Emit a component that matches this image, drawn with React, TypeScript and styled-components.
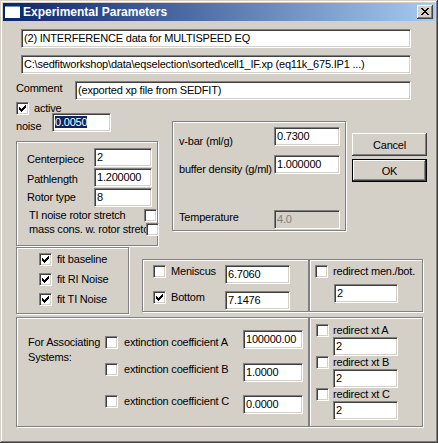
import React from "react";
import styled, { createGlobalStyle } from "styled-components";

const FONT = `"Liberation Sans", Arial, sans-serif`;

const GlobalStyle = createGlobalStyle`
  html, body { margin: 0; padding: 0; background: #d4d0c8; }
  * { box-sizing: border-box; }
`;

const Window = styled.div`
  width: 438px;
  height: 443px;
  padding: 3px;
  background: #d4d0c8;
  box-shadow: inset -1px -1px #404040, inset 1px 1px #d4d0c8, inset -2px -2px #808080, inset 2px 2px #fff;
  font-family: ${FONT};
  font-size: 11px;
  letter-spacing: -0.2px;
  color: #000;
  display: flex;
  flex-direction: column;
  overflow: hidden;
`;

const TitleBar = styled.div`
  height: 18px;
  flex: none;
  display: flex;
  align-items: center;
  padding: 0 2px;
  background: linear-gradient(to right, #0a246a, #a6caf0);
`;

const TitleText = styled.span`
  flex: 1;
  margin-left: 2px;
  font-family: "Liberation Sans", Arial, sans-serif;
  font-weight: bold;
  font-size: 12px;
  letter-spacing: 0;
  color: #fff;
  white-space: nowrap;
`;

const CloseButton = styled.div`
  width: 16px;
  height: 14px;
  flex: none;
  background: #d4d0c8;
  box-shadow: inset -1px -1px #404040, inset 1px 1px #fff, inset -2px -2px #808080, inset 2px 2px #d4d0c8;
  svg { display: block; }
`;

const Body = styled.div`
  display: flex;
  flex-direction: column;
  padding: 8px 0 0 13px;
`;

const Line = styled.div<{ $mt?: number; $ml?: number }>`
  display: flex;
  align-items: flex-start;
  flex: none;
  margin-top: ${(p) => p.$mt ?? 0}px;
  margin-left: ${(p) => p.$ml ?? 0}px;
`;

const Column = styled.div<{ $w?: number; $mt?: number; $ml?: number; $gap?: number }>`
  display: flex;
  flex-direction: column;
  align-items: flex-start;
  flex: none;
  width: ${(p) => (p.$w ? `${p.$w}px` : "auto")};
  margin-top: ${(p) => p.$mt ?? 0}px;
  margin-left: ${(p) => p.$ml ?? 0}px;
  gap: ${(p) => p.$gap ?? 0}px;
`;

const Group = styled.div<{ $w: number; $h: number; $mt?: number; $ml?: number; $pt: number; $pl: number }>`
  flex: none;
  display: flex;
  flex-direction: column;
  align-items: flex-start;
  width: ${(p) => p.$w}px;
  height: ${(p) => p.$h}px;
  margin-top: ${(p) => p.$mt ?? 0}px;
  margin-left: ${(p) => p.$ml ?? 0}px;
  padding: ${(p) => p.$pt}px 0 0 ${(p) => p.$pl}px;
  border: 1px solid #808080;
  box-shadow: inset 1px 1px #fff, 1px 1px #fff;
`;

const GroupRow = styled(Group)`
  flex-direction: row;
`;

const TextField = styled.div<{ $w: number; $disabled?: boolean; $mt?: number; $ml?: number }>`
  flex: none;
  width: ${(p) => p.$w}px;
  height: 19px;
  margin-top: ${(p) => p.$mt ?? 0}px;
  margin-left: ${(p) => p.$ml ?? 0}px;
  padding: 0 2px;
  background: ${(p) => (p.$disabled ? "#d4d0c8" : "#fff")};
  color: ${(p) => (p.$disabled ? "#808080" : "#000")};
  border: 1px solid;
  border-color: #808080 #fff #fff #808080;
  box-shadow: inset 1px 1px #404040, inset -1px -1px #d4d0c8;
  line-height: 17px;
  white-space: nowrap;
  overflow: hidden;
`;

const Selected = styled.span`
  background: #0a246a;
  color: #fff;
`;

const Label = styled.span<{ $w?: number; $pt?: number }>`
  flex: none;
  width: ${(p) => (p.$w ? `${p.$w}px` : "auto")};
  padding-top: ${(p) => p.$pt ?? 0}px;
  line-height: 15px;
  white-space: nowrap;
`;

const Caption = styled.span<{ $w?: number; $ml?: number; $mt?: number; $clip?: boolean }>`
  flex: none;
  width: ${(p) => (p.$w ? `${p.$w}px` : "auto")};
  margin-left: ${(p) => p.$ml ?? 5}px;
  margin-top: ${(p) => p.$mt ?? 0}px;
  line-height: 13px;
  white-space: nowrap;
  overflow: ${(p) => (p.$clip ? "hidden" : "visible")};
`;

const CheckBox = styled.span<{ $mt?: number; $ml?: number }>`
  flex: none;
  display: block;
  width: 13px;
  height: 13px;
  margin-top: ${(p) => p.$mt ?? 0}px;
  margin-left: ${(p) => p.$ml ?? 0}px;
  background: #fff;
  border: 1px solid;
  border-color: #808080 #fff #fff #808080;
  box-shadow: inset 1px 1px #404040, inset -1px -1px #d4d0c8;
  svg { display: block; }
`;

const PushButton = styled.button<{ $default?: boolean }>`
  width: 75px;
  height: 23px;
  margin: 0;
  padding: 0;
  font: inherit;
  letter-spacing: inherit;
  color: #000;
  background: #d4d0c8;
  border: ${(p) => (p.$default ? "1px solid #000" : "none")};
  box-shadow: inset -1px -1px #404040, inset 1px 1px #fff, inset -2px -2px #808080, inset 2px 2px #d4d0c8;
`;

const CHECK_PIXELS: [number, number, number][] = [
  [8, 2, 1],
  [7, 3, 2],
  [2, 4, 1],
  [6, 4, 3],
  [2, 5, 2],
  [5, 5, 3],
  [2, 6, 5],
  [3, 7, 3],
  [4, 8, 1],
];

const X_PIXELS: [number, number, number][] = [
  [4, 3, 2], [10, 3, 2],
  [5, 4, 2], [9, 4, 2],
  [6, 5, 4],
  [7, 6, 2],
  [6, 7, 4],
  [5, 8, 2], [9, 8, 2],
  [4, 9, 2], [10, 9, 2],
];

function Check({ checked, mt, ml }: { checked?: boolean; mt?: number; ml?: number }) {
  return (
    <CheckBox $mt={mt} $ml={ml}>
      {checked && (
        <svg width="11" height="11" viewBox="0 0 11 11" shapeRendering="crispEdges">
          {CHECK_PIXELS.map(([x, y, w], i) => (
            <rect key={i} x={x} y={y} width={w} height={1} fill="#000" />
          ))}
        </svg>
      )}
    </CheckBox>
  );
}

function WindowIcon() {
  return (
    <svg width="16" height="14" viewBox="0 0 16 14" shapeRendering="crispEdges">
      <rect x="0" y="1" width="15" height="12" fill="#fff" />
      <rect x="0" y="1" width="15" height="1" fill="#6f8fc8" />
    </svg>
  );
}

function CloseGlyph() {
  return (
    <svg width="16" height="14" viewBox="0 0 16 14" shapeRendering="crispEdges">
      {X_PIXELS.map(([x, y, w], i) => (
        <rect key={i} x={x} y={y} width={w} height={1} fill="#000" />
      ))}
    </svg>
  );
}

export default function App() {
  return (
    <>
      <GlobalStyle />
      <Window>
        <TitleBar>
          <WindowIcon />
          <TitleText>Experimental Parameters</TitleText>
          <CloseButton>
            <CloseGlyph />
          </CloseButton>
        </TitleBar>
        <Body>
          <Line $ml={5}>
            <TextField $w={390}>(2) INTERFERENCE data for MULTISPEED EQ</TextField>
          </Line>
          <Line $ml={5} $mt={7}>
            <TextField $w={390}>C:\sedfitworkshop\data\eqselection\sorted\cell1_IF.xp (eq11k_675.IP1 ...)</TextField>
          </Line>
          <Line $mt={7}>
            <Label $w={59}>Comment</Label>
            <TextField $w={336}>(exported xp file from SEDFIT)</TextField>
          </Line>

          {/* section A */}
          <Line>
            <Column $w={142}>
              <Line $mt={2}>
                <Check checked />
                <Caption>active</Caption>
              </Line>
              <Line $mt={-2}>
                <Label $w={36} $pt={6}>noise</Label>
                <TextField $w={59}>
                  <Selected>0.0050</Selected>
                </TextField>
              </Line>
              <Group $w={142} $h={105} $mt={7} $pt={6} $pl={10}>
                <Line>
                  <Label $w={67} $pt={4}>Centerpiece</Label>
                  <TextField $w={58}>2</TextField>
                </Line>
                <Line $mt={1}>
                  <Label $w={67} $pt={4}>Pathlength</Label>
                  <TextField $w={58}>1.200000</TextField>
                </Line>
                <Line $mt={1}>
                  <Label $w={67} $pt={2}>Rotor type</Label>
                  <TextField $w={58}>8</TextField>
                </Line>
                <Line $mt={2}>
                  <Caption $ml={2} $w={115} $clip>TI noise rotor stretch</Caption>
                  <Check />
                </Line>
                <Line $mt={1}>
                  <Caption $ml={2} $w={117} $clip>mass cons. w. rotor stretch</Caption>
                  <Check />
                </Line>
              </Group>
            </Column>

            <Group $w={174} $h={110} $mt={21} $ml={14} $pt={5} $pl={6}>
              <Line>
                <Label $w={95} $pt={7}>v-bar (ml/g)</Label>
                <TextField $w={66}>0.7300</TextField>
              </Line>
              <Line $mt={6}>
                <Label $w={95} $pt={7}>buffer density (g/ml)</Label>
                <TextField $w={66}>1.000000</TextField>
              </Line>
              <Line $mt={33}>
                <Label $w={95} $pt={0}>Temperature</Label>
                <TextField $w={66} $disabled>4.0</TextField>
              </Line>
            </Group>

            <Column $mt={33} $ml={6} $gap={3}>
              <PushButton>Cancel</PushButton>
              <PushButton $default>OK</PushButton>
            </Column>
          </Line>

          {/* section B */}
          <Line $mt={1}>
            <Group $w={113} $h={67} $pt={5} $pl={22}>
              <Line>
                <Check checked />
                <Caption>fit baseline</Caption>
              </Line>
              <Line $mt={7}>
                <Check checked />
                <Caption>fit RI Noise</Caption>
              </Line>
              <Line $mt={7}>
                <Check checked />
                <Caption>fit TI Noise</Caption>
              </Line>
            </Group>

            <Group $w={167} $h={53} $mt={12} $ml={13} $pt={5} $pl={10}>
              <Line>
                <Check />
                <Caption $w={54}>Meniscus</Caption>
                <TextField $w={65}>6.7060</TextField>
              </Line>
              <Line $mt={7}>
                <Check checked />
                <Caption $w={54}>Bottom</Caption>
                <TextField $w={65}>7.1476</TextField>
              </Line>
            </Group>

            <Group $w={114} $h={53} $mt={12} $pt={5} $pl={5}>
              <Line>
                <Check />
                <Caption>redirect men./bot.</Caption>
              </Line>
              <TextField $w={64} $mt={6} $ml={19}>2</TextField>
            </Group>
          </Line>

          {/* section C */}
          <Line $mt={3}>
            <GroupRow $w={293} $h={110} $pt={12} $pl={11}>
              <Label $w={77} $pt={5}>
                For Associating
                <br />
                Systems:
              </Label>
              <Column>
                <Line>
                  <Check mt={6} />
                  <Caption $ml={6} $w={119} $mt={6}>extinction coefficient A</Caption>
                  <TextField $w={60}>100000.00</TextField>
                </Line>
                <Line $mt={14}>
                  <Check />
                  <Caption $ml={6} $w={119}>extinction coefficient B</Caption>
                  <TextField $w={60}>1.0000</TextField>
                </Line>
                <Line $mt={13}>
                  <Check />
                  <Caption $ml={6} $w={119}>extinction coefficient C</Caption>
                  <TextField $w={60}>0.0000</TextField>
                </Line>
              </Column>
            </GroupRow>

            <Group $w={114} $h={110} $pt={6} $pl={6}>
              {["A", "B", "C"].map((k) => (
                <React.Fragment key={k}>
                  <Line>
                    <Check />
                    <Caption $ml={4}>redirect xt {k}</Caption>
                  </Line>
                  <TextField $w={65} $ml={17}>2</TextField>
                </React.Fragment>
              ))}
            </Group>
          </Line>
        </Body>
      </Window>
    </>
  );
}
